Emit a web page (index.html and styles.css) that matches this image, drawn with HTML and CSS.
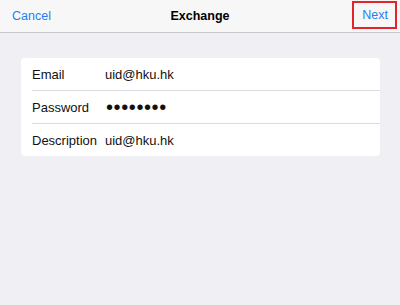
FILE: index.html
```html
<!DOCTYPE html>
<html>
<head>
<meta charset="utf-8">
<link rel="stylesheet" href="styles.css">
</head>
<body>
<header class="nav">
  <span class="nav-btn cancel">Cancel</span>
  <span class="nav-title">Exchange</span>
  <span class="nav-btn next">Next</span>
</header>
<main class="content">
  <section class="card">
    <div class="row">
      <span class="label">Email</span>
      <span class="value">uid@hku.hk</span>
    </div>
    <div class="row">
      <span class="label">Password</span>
      <span class="value dots">••••••••</span>
    </div>
    <div class="row">
      <span class="label">Description</span>
      <span class="value">uid@hku.hk</span>
    </div>
  </section>
</main>
</body>
</html>
```

FILE: styles.css
```css
* { box-sizing: border-box; }
html, body {
  margin: 0;
  padding: 0;
  width: 400px;
  height: 305px;
  background: #efeff4;
  font-family: "Liberation Sans", Arial, sans-serif;
  overflow: hidden;
}
.nav {
  height: 33px;
  background: #f7f7f8;
  border-bottom: 1px solid #c8c7cc;
  display: grid;
  grid-template-columns: 1fr auto 1fr;
  align-items: center;
  padding: 0 3px 1px 3px;
  font-size: 12.5px;
}
.nav-btn { color: #1f7ff0; }
.cancel { justify-self: start; margin-left: 9px; }
.nav-title {
  font-weight: bold;
  color: #000;
}
.next {
  justify-self: end;
  border: 2px solid #e0262c;
  padding: 5px 7px 5px 8px;
  margin-bottom: 2px;
}
.content {
  padding: 25px 20px 0 21px;
}
.card {
  background: #fff;
  border-radius: 4px;
  padding-left: 11px;
  width: 359px;
}
.row {
  height: 33px;
  display: flex;
  align-items: center;
  border-bottom: 1px solid #dcdcdf;
  font-size: 13px;
  color: #111;
}
.row:last-child { border-bottom: none; height: 32px; }
.label { width: 73px; flex: none; }
.dots {
  font-size: 20px;
  letter-spacing: 0.6px;
  line-height: 1;
  margin-left: 1px;
}
```
